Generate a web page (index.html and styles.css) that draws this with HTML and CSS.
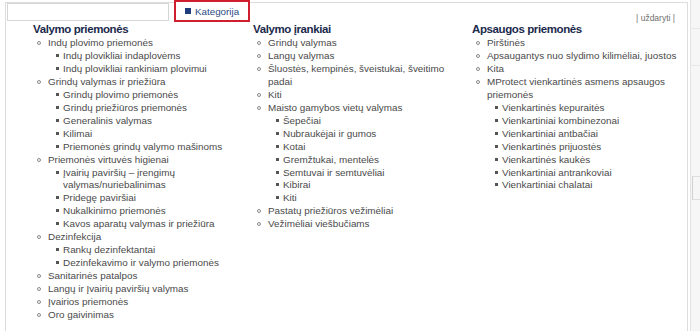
FILE: index.html
```html
<!DOCTYPE html>
<html lang="lt">
<head>
<meta charset="utf-8">
<title>Kategorijos</title>
<link rel="stylesheet" href="styles.css">
</head>
<body>
<div class="page">
  <div class="menu">
    <div class="topbar">
      <div class="search"></div>
      <a class="tab"><span class="sq"></span>Kategorija</a>
      <a class="close">| uždaryti |</a>
    </div>
    <div class="cols">
      <div class="col">
        <h3>Valymo priemonės</h3>
        <ul class="l1">
          <li>Indų plovimo priemonės
            <ul class="l2">
              <li>Indų plovikliai indaplovėms</li>
              <li>Indų plovikliai rankiniam plovimui</li>
            </ul>
          </li>
          <li>Grindų valymas ir priežiūra
            <ul class="l2">
              <li>Grindų plovimo priemonės</li>
              <li>Grindų priežiūros priemonės</li>
              <li>Generalinis valymas</li>
              <li>Kilimai</li>
              <li>Priemonės grindų valymo mašinoms</li>
            </ul>
          </li>
          <li>Priemonės virtuvės higienai
            <ul class="l2">
              <li>Įvairių paviršių – įrengimų valymas/nuriebalinimas</li>
              <li>Pridegę paviršiai</li>
              <li>Nukalkinimo priemonės</li>
              <li>Kavos aparatų valymas ir priežiūra</li>
            </ul>
          </li>
          <li>Dezinfekcija
            <ul class="l2">
              <li>Rankų dezinfektantai</li>
              <li>Dezinfekavimo ir valymo priemonės</li>
            </ul>
          </li>
          <li>Sanitarinės patalpos</li>
          <li>Langų ir Įvairių paviršių valymas</li>
          <li>Įvairios priemonės</li>
          <li>Oro gaivinimas</li>
        </ul>
      </div>
      <div class="col">
        <h3>Valymo įrankiai</h3>
        <ul class="l1">
          <li>Grindų valymas</li>
          <li>Langų valymas</li>
          <li>Šluostės, kempinės, šveistukai, šveitimo padai</li>
          <li>Kiti</li>
          <li>Maisto gamybos vietų valymas
            <ul class="l2">
              <li>Šepečiai</li>
              <li>Nubraukėjai ir gumos</li>
              <li>Kotai</li>
              <li>Gremžtukai, mentelės</li>
              <li>Semtuvai ir semtuvėliai</li>
              <li>Kibirai</li>
              <li>Kiti</li>
            </ul>
          </li>
          <li>Pastatų priežiūros vežimėliai</li>
          <li>Vežimėliai viešbučiams</li>
        </ul>
      </div>
      <div class="col last">
        <h3>Apsaugos priemonės</h3>
        <ul class="l1">
          <li>Pirštinės</li>
          <li>Apsaugantys nuo slydimo kilimėliai, juostos</li>
          <li>Kita</li>
          <li>MProtect vienkartinės asmens apsaugos priemonės
            <ul class="l2">
              <li>Vienkartinės kepuraitės</li>
              <li>Vienkartiniai kombinezonai</li>
              <li>Vienkartiniai antbačiai</li>
              <li>Vienkartinės prijuostės</li>
              <li>Vienkartinės kaukės</li>
              <li>Vienkartiniai antrankoviai</li>
              <li>Vienkartiniai chalatai</li>
            </ul>
          </li>
        </ul>
      </div>
    </div>
  </div>
  <div class="side">
    <div class="side-line a"></div>
    <div class="side-line b"></div>
    <div class="side-box"></div>
  </div>
</div>
</body>
</html>
```
FILE: styles.css
```css
html, body {
  margin: 0;
  padding: 0;
  background: #ffffff;
}
body {
  font-family: "Liberation Sans", Arial, sans-serif;
  color: #4f4f4f;
  overflow: hidden;
}
.page {
  display: flex;
  height: 331px;
}
.menu {
  margin-left: 5px;
  margin-top: 2px;
  width: 681px;
  height: 340px;
  border: 1px solid #dcdcdc;
  border-bottom: none;
  background: #fff;
  flex: none;
}
.topbar {
  display: flex;
  align-items: flex-start;
  height: 22px;
  margin-top: -3px;
}
.search {
  margin-top: 3px;
  margin-left: 1px;
  width: 160px;
  height: 16px;
  border: 1px solid #d6d6d6;
  background: #fff;
}
.tab {
  margin-left: 5px;
  height: 18px;
  border: 2px solid #cf1f2e;
  background: #fff;
  display: flex;
  align-items: center;
  font-size: 9.8px;
  color: #2c4a86;
  padding-left: 9px;
  box-sizing: content-box;
  width: 63px;
}
.sq {
  width: 6px;
  height: 6px;
  background: #1f3d7a;
  margin-right: 4px;
  flex: none;
}
.close {
  margin-left: auto;
  margin-right: 12px;
  align-self: flex-end;
  font-size: 8.5px;
  line-height: 10px;
  color: #707070;
  margin-bottom: -1px;
}
.cols {
  display: grid;
  grid-template-columns: 220px 219px 1fr;
  padding-left: 27px;
  padding-top: 1px;
}
.col {
  padding-right: 12px;
}
.col.last {
  padding-right: 0;
}
h3 {
  margin: 0 0 1px 0;
  font-size: 11.5px;
  line-height: 13px;
  font-weight: bold;
  letter-spacing: -0.4px;
  color: #1b2a4d;
}
ul {
  list-style: none;
  margin: 0;
  padding: 0;
}
li {
  font-size: 9.9px;
  line-height: 12.95px;
  color: #4a4a4a;
}
.l1 {
  padding-left: 15px;
}
.l2 {
  padding-left: 15px;
}
.l1 > li::before {
  content: "";
  display: inline-block;
  box-sizing: border-box;
  width: 4px;
  height: 4px;
  border: 1px solid #8a8a8a;
  border-radius: 50%;
  margin-left: -11.5px;
  margin-right: 7.5px;
  vertical-align: 1px;
}
.l2 > li::before {
  content: "";
  display: inline-block;
  width: 3px;
  height: 3px;
  background: #555;
  margin-left: -7px;
  margin-right: 4px;
  vertical-align: 2px;
}
.side {
  flex: 1;
  background: #f6f6f6;
  border-left: 1px solid #e4e4e4;
  margin-left: 2px;
  display: flex;
  flex-direction: column;
}
.side-line {
  height: 0;
  border-top: 1px solid #e8e8e8;
}
.side-line.a {
  margin-top: 28px;
}
.side-line.b {
  margin-top: 36px;
}
.side-box {
  margin-top: 110px;
  height: 22px;
  border-top: 1px solid #dedede;
  border-bottom: 1px solid #dedede;
  border-left: 1px solid #d0d0d0;
  margin-left: 1px;
}
```
